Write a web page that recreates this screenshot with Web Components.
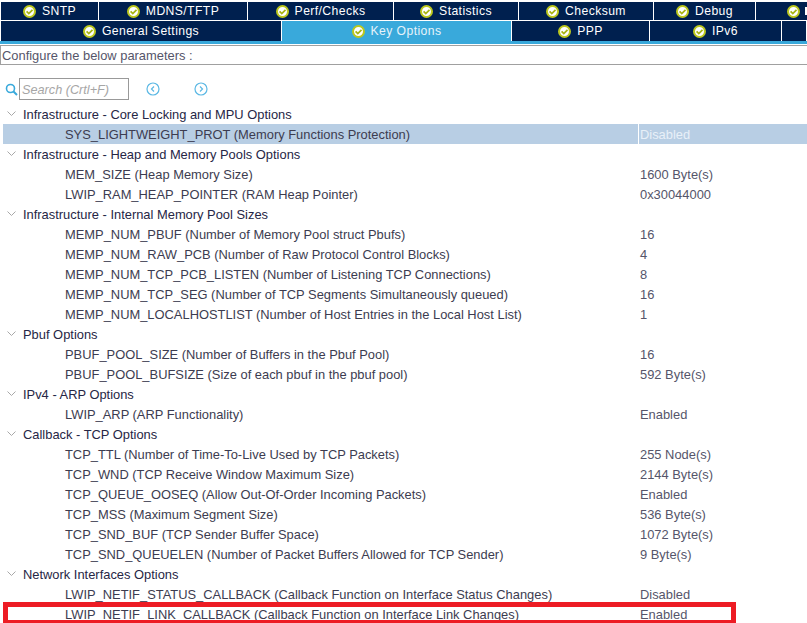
<!DOCTYPE html>
<html>
<head>
<meta charset="utf-8">
<style>
  html, body { margin: 0; padding: 0; background: #fff; height: 623px; overflow: hidden; }
  body { font-family: "Liberation Sans", Arial, sans-serif; }
</style>
</head>
<body>
<config-view></config-view>

<script>
class TabItem extends HTMLElement {
  constructor() {
    super();
    this.attachShadow({ mode: 'open' });
    this.shadowRoot.innerHTML = `
      <style>
        :host { display: flex; align-items: center; justify-content: center; gap: 6px; box-sizing: border-box;
          background: #00204f; color: #fff; border-right: 1px solid #fff; font-size: 12.2px; letter-spacing: .4px;
          white-space: nowrap; overflow: hidden; }
        :host([active]) { background: #39a9db; color: #e6f3fa; }
        :host([blank]) svg { display: none; }
        :host([cut]) { justify-content: flex-start; padding-left: 31px; border-right: 0; }
        /* the next label is cut by the window, only its first stroke shows */
        :host([cut])::after { content: ''; flex: none; width: 2px; height: 8px; margin-left: -1px; background: #fff; }
        svg { width: 13px; height: 13px; flex: none; }
      </style>
      <svg viewBox="0 0 13 13">
        <circle cx="6.5" cy="6.5" r="5.5" fill="#fff" stroke="#bcc81e" stroke-width="2"/>
        <path d="M3.6 6.4l2.2 2.2 3.7-3.7" fill="none" stroke="#a8b414" stroke-width="1.8"/>
      </svg>
      <slot></slot>
    `;
  }
}
customElements.define('tab-item', TabItem);

class TabBar extends HTMLElement {
  constructor() {
    super();
    this.attachShadow({ mode: 'open' });
    this.shadowRoot.innerHTML = `
      <style>
        :host { display: flex; flex-direction: column; gap: 1px; padding: 2px 0 0 1px; border-bottom: 3px solid #39a9db; height: 39px; box-sizing: content-box; }
        .row { display: grid; height: 18px; }
        .row.one { grid-template-columns: 98px 149px 146px 125px 135px 102px 51px; }
        .row.two { height: 20px; grid-template-columns: 281px 230px 138px 132px 25px; }
      </style>
      <div class="row one">
        <tab-item>SNTP</tab-item>
        <tab-item>MDNS/TFTP</tab-item>
        <tab-item>Perf/Checks</tab-item>
        <tab-item>Statistics</tab-item>
        <tab-item>Checksum</tab-item>
        <tab-item>Debug</tab-item>
        <tab-item cut></tab-item>
      </div>
      <div class="row two">
        <tab-item>General Settings</tab-item>
        <tab-item active>Key Options</tab-item>
        <tab-item>PPP</tab-item>
        <tab-item>IPv6</tab-item>
        <tab-item blank></tab-item>
      </div>
    `;
  }
}
customElements.define('tab-bar', TabBar);

class HintBar extends HTMLElement {
  constructor() {
    super();
    this.attachShadow({ mode: 'open' });
    this.shadowRoot.innerHTML = `
      <style>
        :host { display: flex; align-items: center; box-sizing: border-box; height: 20px; margin-top: 1px;
          border: 1px solid #a0a0a0; border-right: 0; padding-left: 1px; font-size: 12.9px; color: #55556a; }
      </style>
      <slot></slot>
    `;
  }
}
customElements.define('hint-bar', HintBar);

class SearchBar extends HTMLElement {
  constructor() {
    super();
    this.attachShadow({ mode: 'open' });
    this.shadowRoot.innerHTML = `
      <style>
        :host { display: flex; align-items: center; height: 22px; margin-top: 13px; padding-left: 5px; box-sizing: border-box; }
        .box { width: 110px; height: 22px; box-sizing: border-box; border: 1px solid #999; margin-left: 1px; padding-left: 2px;
          font: italic 12.7px "Liberation Sans", Arial, sans-serif; color: #a6a6a6; line-height: 22px; white-space: nowrap; }
        .nav { width: 14px; height: 14px; }
        .nav + .nav { margin-left: 34px; }
        .box + .nav { margin-left: 17px; }
      </style>
      <svg width="13" height="13" viewBox="0 0 13 13">
        <circle cx="5.5" cy="5.5" r="4" fill="none" stroke="#39a9db" stroke-width="1.6"/>
        <path d="M8.5 8.5l3.5 3.5" stroke="#39a9db" stroke-width="2"/>
      </svg>
      <div class="box">Search (Crtl+F)</div>
      <svg class="nav" viewBox="0 0 14 14">
        <circle cx="7" cy="7" r="6" fill="none" stroke="#5bb8e4" stroke-width="1.2"/>
        <path d="M8 4.5L5.5 7 8 9.5" fill="none" stroke="#5bb8e4" stroke-width="1.2"/>
      </svg>
      <svg class="nav" viewBox="0 0 14 14">
        <circle cx="7" cy="7" r="6" fill="none" stroke="#5bb8e4" stroke-width="1.2"/>
        <path d="M6 4.5L8.5 7 6 9.5" fill="none" stroke="#5bb8e4" stroke-width="1.2"/>
      </svg>
    `;
  }
}
customElements.define('search-bar', SearchBar);

class ParamGroup extends HTMLElement {
  constructor() {
    super();
    this.attachShadow({ mode: 'open' });
    this.shadowRoot.innerHTML = `
      <style>
        :host { display: block; }
        .head { display: flex; align-items: center; height: 20px; padding-left: 7px; gap: 7px; color: #262645; white-space: nowrap; }
        svg { width: 9px; height: 6px; flex: none; }
      </style>
      <div class="head">
        <svg viewBox="0 0 9 6"><path d="M.5.5L4.5 4.5 8.5.5" fill="none" stroke="#a8a8a8"/></svg>
        <span></span>
      </div>
      <slot></slot>
    `;
  }

  connectedCallback() {
    this.shadowRoot.querySelector('span').textContent = this.getAttribute('label');
  }
}
customElements.define('param-group', ParamGroup);

class ParamRow extends HTMLElement {
  constructor() {
    super();
    this.attachShadow({ mode: 'open' });
    this.shadowRoot.innerHTML = `
      <style>
        :host { display: grid; grid-template-columns: 635px 1fr; height: 20px; margin-left: 3px; align-items: stretch; color: #3c3c50; white-space: nowrap; }
        :host([selected]) { background: #b8cee4; }
        :host([selected]) .val { color: #e8f0f8; border-left-color: #fff; }
        .name { padding: 1px 0 0 62px; line-height: 19px; }
        .val { border-left: 1px solid transparent; padding: 1px 0 0 1px; line-height: 19px; color: #55556a; }
      </style>
      <div class="name"><slot></slot></div>
      <div class="val"></div>
    `;
  }

  connectedCallback() {
    this.shadowRoot.querySelector('.val').textContent = this.getAttribute('value');
  }
}
customElements.define('param-row', ParamRow);

class ConfigView extends HTMLElement {
  constructor() {
    super();
    this.attachShadow({ mode: 'open' });
    const groups = [
      ['Infrastructure - Core Locking and MPU Options', [
        ['SYS_LIGHTWEIGHT_PROT (Memory Functions Protection)', 'Disabled', true],
      ]],
      ['Infrastructure - Heap and Memory Pools Options', [
        ['MEM_SIZE (Heap Memory Size)', '1600 Byte(s)'],
        ['LWIP_RAM_HEAP_POINTER (RAM Heap Pointer)', '0x30044000'],
      ]],
      ['Infrastructure - Internal Memory Pool Sizes', [
        ['MEMP_NUM_PBUF (Number of Memory Pool struct Pbufs)', '16'],
        ['MEMP_NUM_RAW_PCB (Number of Raw Protocol Control Blocks)', '4'],
        ['MEMP_NUM_TCP_PCB_LISTEN (Number of Listening TCP Connections)', '8'],
        ['MEMP_NUM_TCP_SEG (Number of TCP Segments Simultaneously queued)', '16'],
        ['MEMP_NUM_LOCALHOSTLIST (Number of Host Entries in the Local Host List)', '1'],
      ]],
      ['Pbuf Options', [
        ['PBUF_POOL_SIZE (Number of Buffers in the Pbuf Pool)', '16'],
        ['PBUF_POOL_BUFSIZE (Size of each pbuf in the pbuf pool)', '592 Byte(s)'],
      ]],
      ['IPv4 - ARP Options', [
        ['LWIP_ARP (ARP Functionality)', 'Enabled'],
      ]],
      ['Callback - TCP Options', [
        ['TCP_TTL (Number of Time-To-Live Used by TCP Packets)', '255 Node(s)'],
        ['TCP_WND (TCP Receive Window Maximum Size)', '2144 Byte(s)'],
        ['TCP_QUEUE_OOSEQ (Allow Out-Of-Order Incoming Packets)', 'Enabled'],
        ['TCP_MSS (Maximum Segment Size)', '536 Byte(s)'],
        ['TCP_SND_BUF (TCP Sender Buffer Space)', '1072 Byte(s)'],
        ['TCP_SND_QUEUELEN (Number of Packet Buffers Allowed for TCP Sender)', '9 Byte(s)'],
      ]],
      ['Network Interfaces Options', [
        ['LWIP_NETIF_STATUS_CALLBACK (Callback Function on Interface Status Changes)', 'Disabled'],
        ['LWIP_NETIF_LINK_CALLBACK (Callback Function on Interface Link Changes)', 'Enabled'],
      ]],
    ];
    this.shadowRoot.innerHTML = `
      <style>
        :host { display: block; position: relative; height: 623px; overflow: hidden; }
        .tree { margin-top: 4px; font-size: 12.9px; }
        .mark { position: absolute; left: 3px; top: 602px; width: 733px; height: 21px; box-sizing: border-box; border: 5px solid #ed1c24; border-bottom-width: 3px; }
      </style>
      <tab-bar></tab-bar>
      <hint-bar>Configure the below parameters :</hint-bar>
      <search-bar></search-bar>
      <div class="tree"></div>
      <div class="mark"></div>
    `;
    const tree = this.shadowRoot.querySelector('.tree');
    for (const [label, rows] of groups) {
      const group = document.createElement('param-group');
      group.setAttribute('label', label);
      for (const [name, value, selected] of rows) {
        const row = document.createElement('param-row');
        row.setAttribute('value', value);
        if (selected) row.setAttribute('selected', '');
        row.textContent = name;
        group.appendChild(row);
      }
      tree.appendChild(group);
    }
  }
}
customElements.define('config-view', ConfigView);
</script>
</body>
</html>
